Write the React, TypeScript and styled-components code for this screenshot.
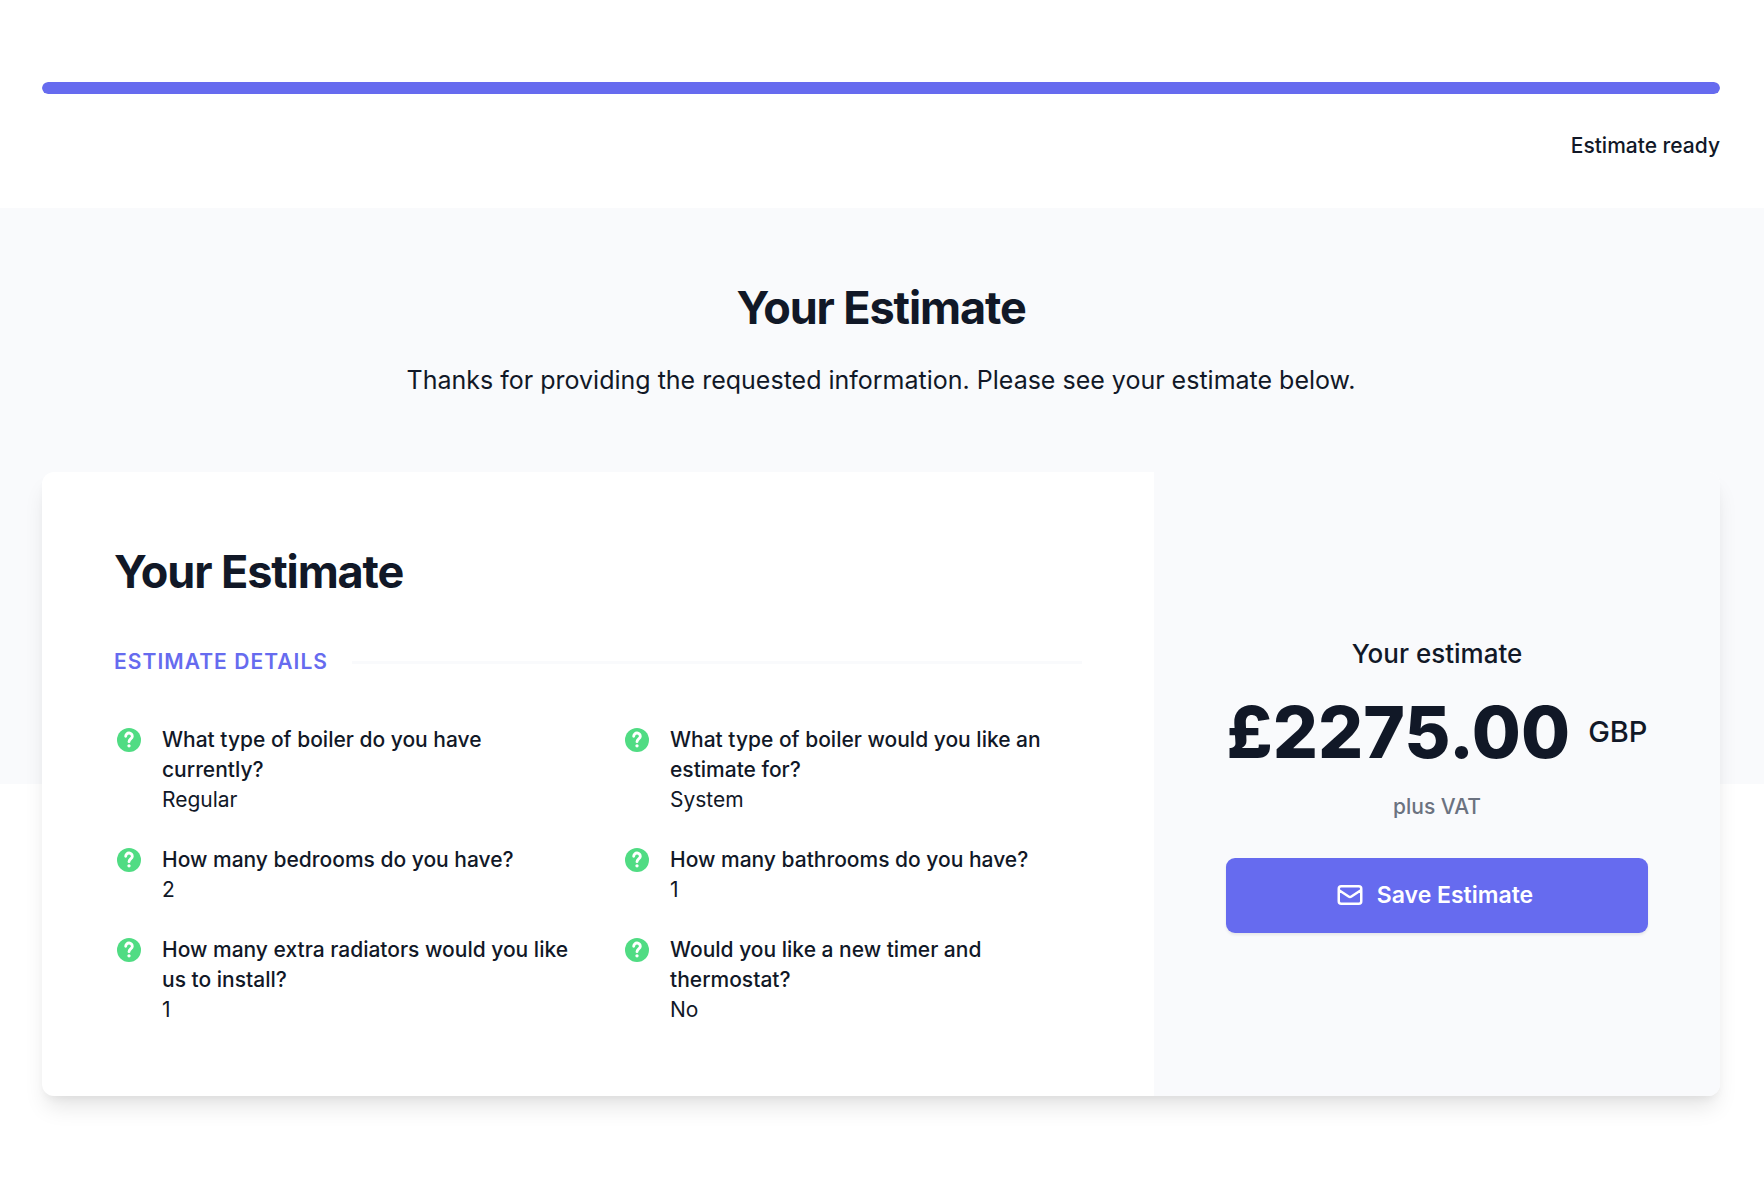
import React from 'react';
import styled, { createGlobalStyle } from 'styled-components';
import { HiOutlineMail } from 'react-icons/hi';

const color = {
  ink: '#111827',
  muted: '#6b7280',
  brand: '#666bef',
  green: '#50dc83',
  surface: '#f9fafc',
  white: '#ffffff',
};

const GlobalStyle = createGlobalStyle`
  *, *::before, *::after { box-sizing: border-box; }
  body {
    margin: 0;
    background: ${color.white};
    color: ${color.ink};
    font-family: Inter, "Liberation Sans", sans-serif;
    font-size: 21px;
    line-height: 30px;
    -webkit-font-smoothing: antialiased;
  }
  h1, h2, h3, p, dl, dt, dd { margin: 0; }
`;

const Page = styled.div`
  min-height: 100vh;
  padding-bottom: 72px;
`;

const ProgressSection = styled.section`
  padding: 82px 44px 47px 42px;
`;

const Track = styled.div`
  height: 12px;
  border-radius: 6px;
  overflow: hidden;
  background: #e5e7eb;
`;

const Fill = styled.div`
  height: 100%;
  border-radius: 6px;
  background: ${color.brand};
`;

const Status = styled.p`
  margin-top: 37px;
  text-align: right;
  font-weight: 500;
`;

const Intro = styled.header`
  padding: 73px 44px 71px 42px;
  background: ${color.surface};
  text-align: center;
`;

const Title = styled.h2`
  font-size: 45px;
  line-height: 54px;
  font-weight: 700;
  letter-spacing: -0.025em;
`;

const Lead = styled.p`
  margin-top: 24px;
  font-size: 25px;
  line-height: 42px;
`;

/* The tinted band stops halfway down the card. */
const CardBand = styled.section`
  padding: 0 44px 0 42px;
  background: linear-gradient(${color.surface} 50%, ${color.white} 50%);
`;

const Card = styled.div`
  display: flex;
  border-radius: 12px;
  overflow: hidden;
  background: ${color.white};
  box-shadow: 0 15px 22px -4px rgba(0, 0, 0, 0.1), 0 6px 9px -3px rgba(0, 0, 0, 0.05);
`;

const Details = styled.div`
  flex: 1 1 0;
  min-width: 0;
  padding: 73px 72px 71px;
`;

const DetailsHeader = styled.div`
  display: flex;
  align-items: center;
  gap: 24px;
  margin: 48px 0;
`;

const DetailsLabel = styled.h3`
  color: ${color.brand};
  font-size: 21px;
  line-height: 30px;
  font-weight: 600;
  letter-spacing: 0.05em;
  text-transform: uppercase;
`;

const Rule = styled.div`
  flex: 1;
  height: 3px;
  background: ${color.surface};
`;

const AnswerGrid = styled.dl`
  display: grid;
  grid-template-columns: 1fr 1fr;
  gap: 30px 48px;
`;

const AnswerItem = styled.div`
  display: grid;
  grid-template-columns: 30px 1fr;
  column-gap: 18px;
  align-items: start;
`;

const HelpSvg = styled.svg`
  display: block;
  width: 30px;
  height: 30px;
  color: ${color.green};
`;

const HelpIcon = () => (
  <HelpSvg viewBox="0 0 20 20" fill="none" aria-hidden="true">
    <circle cx="10" cy="10" r="8" fill="currentColor" />
    <path
      d="M7.8 7.5A2.2 2.2 0 0 1 12.2 7.6C12.2 9.2 10 9.4 10 11.1"
      stroke={color.white}
      strokeWidth="1.9"
      strokeLinecap="round"
      strokeLinejoin="round"
    />
    <circle cx="10" cy="13.9" r="1.1" fill={color.white} />
  </HelpSvg>
);

const Question = styled.dt`
  font-weight: 500;
`;

const Answer = styled.dd`
  grid-column: 2;
`;

const Summary = styled.aside`
  flex: 0 0 auto;
  min-width: 566px;
  display: flex;
  flex-direction: column;
  justify-content: center;
  padding: 72px;
  background: ${color.surface};
  text-align: center;
`;

const SummaryLabel = styled.p`
  font-size: 26px;
  line-height: 36px;
  font-weight: 500;
`;

const PriceRow = styled.div`
  display: flex;
  align-items: center;
  justify-content: center;
  gap: 18px;
  margin-top: 24px;
`;

const Price = styled.span`
  font-size: 71px;
  line-height: 72px;
  font-weight: 800;
`;

const Currency = styled.span`
  font-size: 29px;
  line-height: 42px;
  font-weight: 500;
`;

const Tax = styled.p`
  margin-top: 24px;
  color: ${color.muted};
  font-weight: 500;
`;

const SaveButton = styled.button`
  display: flex;
  align-items: center;
  justify-content: center;
  gap: 12px;
  width: 100%;
  min-height: 75px;
  margin-top: 36px;
  padding: 18px 30px 18px 24px;
  border: 0;
  border-radius: 9px;
  background: ${color.brand};
  color: ${color.white};
  font: inherit;
  font-size: 23px;
  line-height: 36px;
  font-weight: 600;
  cursor: pointer;
  box-shadow: 0 2px 3px rgba(0, 0, 0, 0.08);
`;

const MailIcon = styled(HiOutlineMail)`
  width: 30px;
  height: 30px;
`;

const answers = [
  { question: 'What type of boiler do you have currently?', answer: 'Regular' },
  { question: 'What type of boiler would you like an estimate for?', answer: 'System' },
  { question: 'How many bedrooms do you have?', answer: '2' },
  { question: 'How many bathrooms do you have?', answer: '1' },
  { question: 'How many extra radiators would you like us to install?', answer: '1' },
  { question: 'Would you like a new timer and thermostat?', answer: 'No' },
];

const progress = 100;

export default function App() {
  return (
    <Page>
      <GlobalStyle />
      <ProgressSection>
        <Track role="progressbar" aria-label="Estimate progress" aria-valuenow={progress} aria-valuemin={0} aria-valuemax={100}>
          <Fill style={{ width: `${progress}%` }} />
        </Track>
        <Status>Estimate ready</Status>
      </ProgressSection>
      <main>
        <Intro>
          <Title as="h1">Your Estimate</Title>
          <Lead>Thanks for providing the requested information. Please see your estimate below.</Lead>
        </Intro>
        <CardBand>
          <Card>
            <Details>
              <Title>Your Estimate</Title>
              <DetailsHeader>
                <DetailsLabel>Estimate details</DetailsLabel>
                <Rule />
              </DetailsHeader>
              <AnswerGrid>
                {answers.map(({ question, answer }) => (
                  <AnswerItem key={question}>
                    <HelpIcon />
                    <Question>{question}</Question>
                    <Answer>{answer}</Answer>
                  </AnswerItem>
                ))}
              </AnswerGrid>
            </Details>
            <Summary>
              <SummaryLabel>Your estimate</SummaryLabel>
              <PriceRow>
                <Price>£2275.00</Price>
                <Currency>GBP</Currency>
              </PriceRow>
              <Tax>plus VAT</Tax>
              <SaveButton type="button">
                <MailIcon aria-hidden="true" />
                Save Estimate
              </SaveButton>
            </Summary>
          </Card>
        </CardBand>
      </main>
    </Page>
  );
}
